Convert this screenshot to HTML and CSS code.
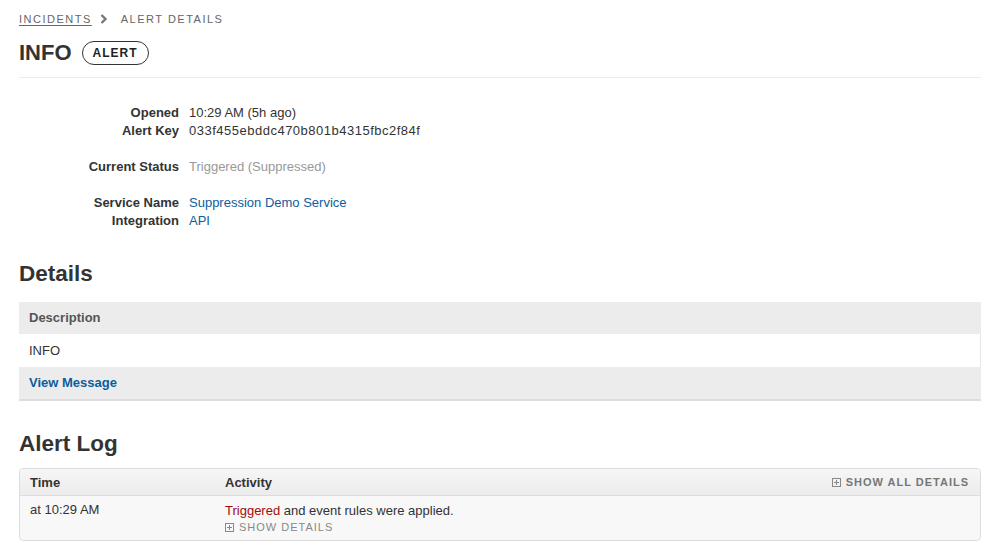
FILE: index.html
```html
<!DOCTYPE html>
<html lang="en">
<head>
    <meta charset="UTF-8">
    <title>Alert Details</title>
    <link rel="stylesheet" href="styles.css">
</head>
<body>
    <div class="page">
        <div class="breadcrumb">
            <a href="#" class="crumb-link">Incidents</a>
            <svg class="crumb-sep" width="8" height="10" viewBox="0 0 8 10"><path d="M1.5 1 L5.5 5 L1.5 9" fill="none" stroke="#777" stroke-width="2.4"/></svg>
            <span>Alert Details</span>
        </div>

        <div class="title-row">
            <h1>INFO</h1>
            <span class="badge">Alert</span>
        </div>

        <div class="summary">
            <div class="group">
                <div class="label">Opened</div><div class="value">10:29 AM (5h ago)</div>
                <div class="label">Alert Key</div><div class="value key">033f455ebddc470b801b4315fbc2f84f</div>
            </div>
            <div class="group">
                <div class="label">Current Status</div><div class="value muted">Triggered (Suppressed)</div>
            </div>
            <div class="group">
                <div class="label">Service Name</div><div class="value"><a href="#">Suppression Demo Service</a></div>
                <div class="label">Integration</div><div class="value"><a href="#">API</a></div>
            </div>
        </div>

        <h2>Details</h2>
        <div class="details-table">
            <div class="details-head">Description</div>
            <div class="details-body">INFO</div>
            <div class="details-foot"><a href="#">View Message</a></div>
        </div>

        <h2 class="log-title">Alert Log</h2>
        <div class="log-table">
            <div class="log-head">
                <div class="col-time">Time</div>
                <div class="col-activity">Activity</div>
                <div class="toggle toggle-all"><span class="plus"></span>Show all details</div>
            </div>
            <div class="log-row">
                <div class="col-time">at 10:29 AM</div>
                <div class="col-activity">
                    <div><span class="triggered">Triggered</span> and event rules were applied.</div>
                    <div class="toggle"><span class="plus"></span>Show details</div>
                </div>
            </div>
        </div>
    </div>
</body>
</html>
```

FILE: styles.css
```css
* {
    margin: 0;
    padding: 0;
    box-sizing: border-box;
}

body {
    font-family: 'Liberation Sans', Arial, sans-serif;
    font-size: 13px;
    color: #333;
    background-color: #fff;
}

a {
    color: #0d5c9e;
    text-decoration: none;
}

.page {
    padding: 12px 6px 0 19px;
}

.breadcrumb {
    display: flex;
    align-items: center;
    font-size: 11px;
    letter-spacing: 1.5px;
    text-transform: uppercase;
    color: #666;
    height: 14px;
}

.crumb-link {
    color: #666;
    text-decoration: underline;
    text-underline-offset: 2px;
}

.crumb-sep {
    margin: 0 13px 0 8px;
}

.title-row {
    display: flex;
    align-items: center;
    gap: 10px;
    margin-top: 13px;
    padding-bottom: 10px;
    border-bottom: 1px solid #ebebeb;
}

h1 {
    font-size: 22px;
    font-weight: bold;
    color: #333;
    line-height: 28px;
}

.badge {
    display: inline-block;
    border: 1px solid #333;
    border-radius: 12px;
    height: 24px;
    line-height: 22px;
    padding: 0 10px;
    font-size: 12px;
    font-weight: bold;
    letter-spacing: 1px;
    text-transform: uppercase;
    color: #222;
}

.summary {
    margin-top: 26px;
}

.group {
    display: grid;
    grid-template-columns: 160px 1fr;
    column-gap: 10px;
    line-height: 18px;
    margin-bottom: 18px;
}

.label {
    text-align: right;
    font-weight: bold;
    color: #333;
}

.value {
    color: #333;
}

.key {
    letter-spacing: 0.5px;
}

.muted {
    color: #999;
}

h2 {
    font-size: 22.5px;
    font-weight: bold;
    color: #333;
    line-height: 28px;
    margin-top: 30px;
    margin-bottom: 14px;
}

.log-title {
    margin-top: 29px;
    margin-bottom: 10px;
}

.details-table {
    border-bottom: 2px solid #ddd;
}

.details-head,
.details-body,
.details-foot {
    height: 32px;
    line-height: 32px;
    padding: 0 10px;
}

.details-head {
    background-color: #ececec;
    font-weight: bold;
    color: #555;
}

.details-body {
    height: 33px;
    line-height: 33px;
    background-color: #fff;
    border-right: 1px solid #e6e6e6;
}

.details-foot {
    background-color: #ececec;
    font-weight: bold;
}

.log-table {
    border: 1px solid #dcdcdc;
    border-radius: 4px;
    background-color: #f8f8f8;
    overflow: hidden;
}

.log-head {
    display: flex;
    align-items: center;
    height: 27px;
    background: linear-gradient(#f6f6f6, #ececec);
    border-bottom: 1px solid #dcdcdc;
    font-weight: bold;
    color: #333;
}

.log-row {
    display: flex;
    padding: 6px 0 5px;
}

.col-time {
    width: 205px;
    padding-left: 10px;
}

.col-activity {
    flex: 1;
    line-height: 17px;
}

.triggered {
    color: #a30b0b;
}

.toggle {
    display: flex;
    align-items: center;
    font-size: 11px;
    letter-spacing: 1px;
    text-transform: uppercase;
    color: #888;
    line-height: 16px;
}

.toggle-all {
    margin-right: 11px;
    font-weight: bold;
    color: #777;
}

.plus {
    position: relative;
    width: 9px;
    height: 9px;
    border: 1px solid #888;
    margin-right: 5px;
}

.plus::before,
.plus::after {
    content: "";
    position: absolute;
    background-color: #888;
}

.plus::before {
    left: 1px;
    right: 1px;
    top: 3px;
    height: 1px;
}

.plus::after {
    top: 1px;
    bottom: 1px;
    left: 3px;
    width: 1px;
}
```
